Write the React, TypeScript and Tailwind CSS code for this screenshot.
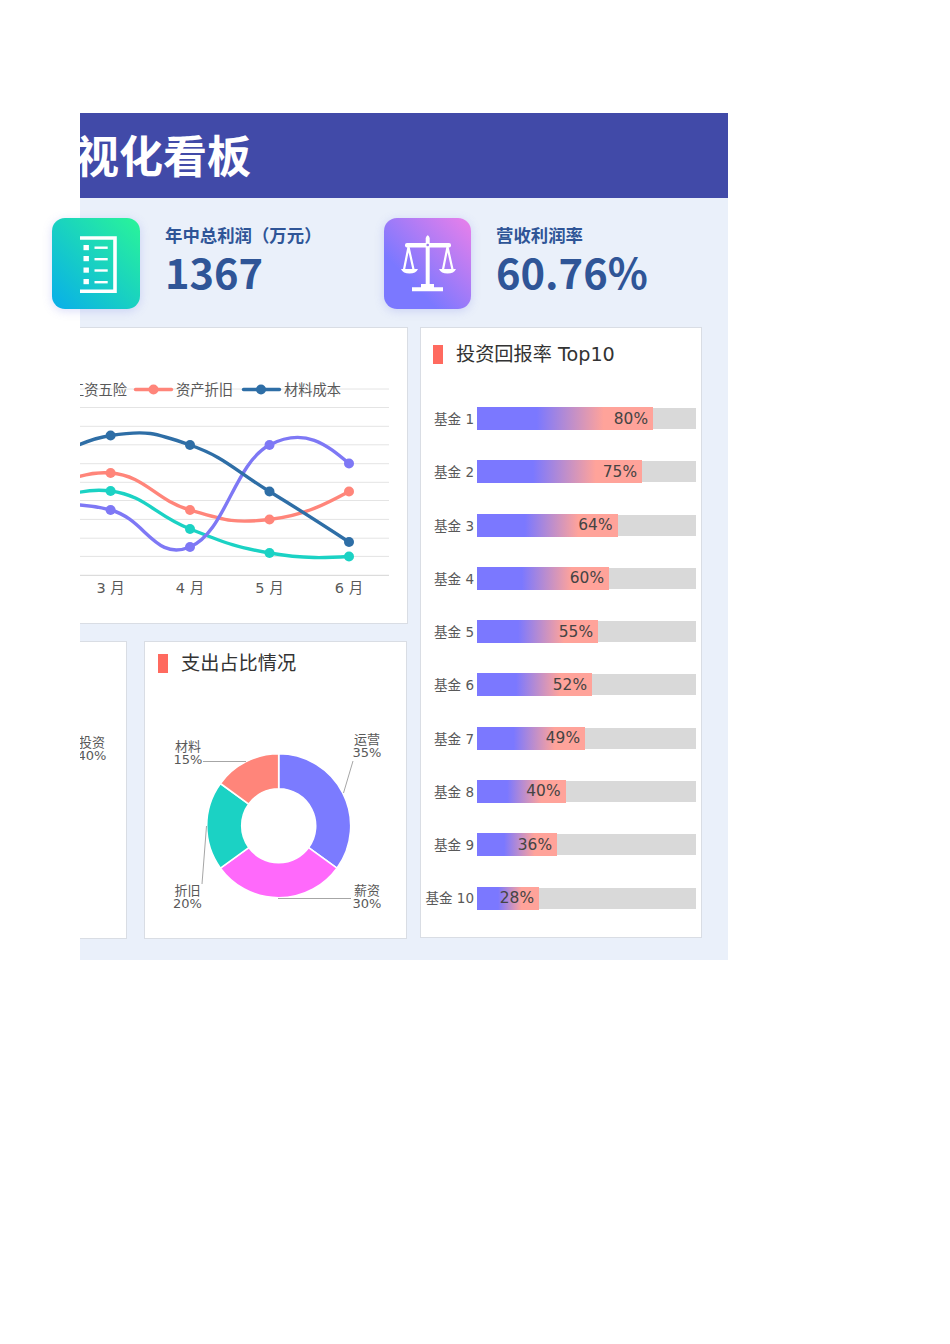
import React from "react";

const FONT = '"DejaVu Sans","Noto Sans CJK SC",sans-serif';
const CJK = '"Noto Sans CJK SC",sans-serif';
const XS = [31, 110.6, 190, 269.5, 349];
const GRID = [389, 407.5, 426.3, 444.8, 463.7, 482.3, 500.5, 519.4, 538.2, 556.4];

const SERIES = [
  { color: "#1bd2c4", ys: [508, 491, 529, 553, 556.5] },
  { color: "#ff857a", ys: [497, 473, 510, 519.5, 491.5] },
  { color: "#7e78f5", ys: [505, 510, 547, 445, 463.5] },
  { color: "#2e6ea6", ys: [470, 435.5, 445, 491.5, 542] },
];

function smooth(xs: number[], ys: number[]) {
  const k = 4.5;
  const n = xs.length;
  let d = `M${xs[0]} ${ys[0]}`;
  for (let i = 0; i < n - 1; i++) {
    const i0 = Math.max(0, i - 1);
    const c1x = xs[i] + (xs[i + 1] - xs[i0]) / k;
    const c1y = ys[i] + (ys[i + 1] - ys[i0]) / k;
    let c2x: number;
    let c2y: number;
    if (i + 2 < n) {
      c2x = xs[i + 1] - (xs[i + 2] - xs[i]) / k;
      c2y = ys[i + 1] - (ys[i + 2] - ys[i]) / k;
    } else {
      c2x = (c1x + xs[i + 1]) / 2;
      c2y = (c1y + ys[i + 1]) / 2;
    }
    d += ` C${c1x} ${c1y} ${c2x} ${c2y} ${xs[i + 1]} ${ys[i + 1]}`;
  }
  return d;
}

function LineChart() {
  return (
    <svg viewBox="80 327 328 297" className="block h-[297px] w-[328px]" style={{ fontFamily: FONT }}>
      {GRID.map((y) => (
        <line key={y} x1="70" x2="389" y1={y} y2={y} stroke="#e4e4e4" strokeWidth="1" />
      ))}
      <line x1="70" x2="389" y1="575.3" y2="575.3" stroke="#d4d4d4" strokeWidth="1" />
      {SERIES.map((s) => (
        <g key={s.color}>
          <path d={smooth(XS, s.ys)} fill="none" stroke={s.color} strokeWidth="3.4" strokeLinecap="round" />
          {XS.slice(1).map((x, i) => (
            <circle key={x} cx={x} cy={s.ys[i + 1]} r="5" fill={s.color} />
          ))}
        </g>
      ))}
      <text x="70" y="395" fontSize="14.25" fill="#595959">工资五险</text>
      <line x1="135.5" x2="171.5" y1="389.5" y2="389.5" stroke="#ff857a" strokeWidth="3.4" strokeLinecap="round" />
      <circle cx="153.5" cy="389.5" r="5" fill="#ff857a" />
      <text x="176" y="395" fontSize="14.25" fill="#595959">资产折旧</text>
      <line x1="243.5" x2="279.5" y1="389.5" y2="389.5" stroke="#2e6ea6" strokeWidth="3.4" strokeLinecap="round" />
      <circle cx="261" cy="389.5" r="5" fill="#2e6ea6" />
      <text x="284" y="395" fontSize="14.25" fill="#595959">材料成本</text>
      {["3 月", "4 月", "5 月", "6 月"].map((m, i) => (
        <text key={m} x={XS[i + 1]} y="592.5" fontSize="14.5" textAnchor="middle" fill="#595959">{m}</text>
      ))}
    </svg>
  );
}

function arc(cx: number, cy: number, R: number, r: number, a0: number, a1: number) {
  const p = (rad: number, a: number) => {
    const t = ((a - 90) * Math.PI) / 180;
    return `${(cx + rad * Math.cos(t)).toFixed(2)} ${(cy + rad * Math.sin(t)).toFixed(2)}`;
  };
  const large = a1 - a0 > 180 ? 1 : 0;
  return `M${p(R, a0)} A${R} ${R} 0 ${large} 1 ${p(R, a1)} L${p(r, a1)} A${r} ${r} 0 ${large} 0 ${p(r, a0)} Z`;
}

const SLICES = [
  { color: "#7b7bff", from: 0, to: 126 },
  { color: "#ff69fb", from: 126, to: 234 },
  { color: "#1bd2c4", from: 234, to: 306 },
  { color: "#ff857a", from: 306, to: 360 },
];

const LABELS = [
  { x: 367, y: 744, a: "运营", b: "35%" },
  { x: 367, y: 895, a: "薪资", b: "30%" },
  { x: 187.5, y: 895, a: "折旧", b: "20%" },
  { x: 188, y: 751, a: "材料", b: "15%" },
];

function Donut() {
  return (
    <svg viewBox="145 684 261 254" className="block h-[254px] w-[261px]" style={{ fontFamily: FONT }}>
      {SLICES.map((s) => (
        <path key={s.color} d={arc(278.7, 825.8, 72, 37, s.from, s.to)} fill={s.color} stroke="#fff" strokeWidth="1.6" />
      ))}
      <g fill="none" stroke="#a6a6a6" strokeWidth="1">
        <path d="M353 761 L343.5 793" />
        <path d="M278 898.5 L351 898.5" />
        <path d="M202 884 L206.5 826" />
        <path d="M203 761.5 L246 761.5" />
      </g>
      {LABELS.map((l) => (
        <g key={l.a} fontSize="13" fill="#595959" textAnchor="middle">
          <text x={l.x} y={l.y}>{l.a}</text>
          <text x={l.x} y={l.y + 13}>{l.b}</text>
        </g>
      ))}
    </svg>
  );
}

function DocIcon() {
  return (
    <svg viewBox="52 218 88 91" className="h-[91px] w-[88px]">
      <path d="M80 238 H115 V291.3 H80" fill="none" stroke="#fff" strokeWidth="3.6" />
      {[245, 256, 267.5, 279].map((y) => (
        <rect key={y} x="83.5" y={y} width="5.4" height="5.2" fill="#fff" />
      ))}
      {[246.5, 258, 269.3, 281].map((y) => (
        <rect key={y} x="94.5" y={y} width="13.2" height="2.4" fill="#fff" />
      ))}
    </svg>
  );
}

function ScaleIcon() {
  return (
    <svg viewBox="384 218 87 91" className="h-[91px] w-[87px]">
      <path d="M425.7 238 Q427.7 232.5 429.7 238 V284 H434 V287.3 H443 V291.3 H412 V287.3 H421 V284 H425.7 Z" fill="#fff" />
      <rect x="405" y="243" width="46" height="4.4" rx="2" fill="#fff" />
      <circle cx="427.7" cy="245" r="1.3" fill="#9b7bf0" />
      <g fill="none" stroke="#fff" strokeWidth="2.2">
        <path d="M408.5 247 L404 269.5 M408.5 247 L413.5 269.5" />
        <path d="M447.5 247 L443 269.5 M447.5 247 L452.5 269.5" />
      </g>
      <path d="M401 269 H418 Q416 273.5 409.5 273.5 Q403 273.5 401 269 Z" fill="#fff" />
      <path d="M439 269 H456 Q454 273.5 447.5 273.5 Q441 273.5 439 269 Z" fill="#fff" />
    </svg>
  );
}

function CardTitle({ children }: { children: React.ReactNode }) {
  return (
    <div className="flex h-[28px] items-center gap-[13px] text-[19.2px] text-[#333333]" style={{ fontFamily: FONT }}>
      <span className="h-[19px] w-[10px] bg-[#ff6a5f]" />
      <span className="pt-[2px] leading-[26px]">{children}</span>
    </div>
  );
}

const FUNDS = [
  { name: "基金 1", v: 80, w: 176 },
  { name: "基金 2", v: 75, w: 165 },
  { name: "基金 3", v: 64, w: 140.5 },
  { name: "基金 4", v: 60, w: 132 },
  { name: "基金 5", v: 55, w: 121 },
  { name: "基金 6", v: 52, w: 115 },
  { name: "基金 7", v: 49, w: 108 },
  { name: "基金 8", v: 40, w: 88.5 },
  { name: "基金 9", v: 36, w: 80 },
  { name: "基金 10", v: 28, w: 62 },
];

function Stat({ label, value, icon, gradient, wide }: { label: string; value: string; icon: React.ReactNode; gradient: string; wide: string }) {
  return (
    <div className={`flex ${wide} items-start`}>
      <div className={`h-[91px] shrink-0 overflow-hidden rounded-[13px] shadow-[0_2px_10px_rgba(110,120,230,0.25)] ${gradient}`}>
        {icon}
      </div>
      <div className="ml-[25px] flex flex-col">
        <div className="mt-[7px] text-[17.4px] font-bold leading-[20px] text-[#2f5597]" style={{ fontFamily: CJK }}>{label}</div>
        <div className="mt-[3px] text-[41.6px] font-bold leading-[46px] text-[#2f5597]" style={{ fontFamily: CJK }}>{value}</div>
      </div>
    </div>
  );
}

export default function App() {
  return (
    <div className="min-h-[1344px] bg-white pl-20 pt-[113px]">
      <div className="h-[847px] w-[648px] bg-[#eaf0fa]">
        <div className="h-[85px] overflow-hidden bg-[#414aa8]">
          <div
            className="ml-[-137px] mt-[-1px] whitespace-nowrap text-[44px] font-bold leading-[85px] text-white"
            style={{ fontFamily: CJK }}
          >
            数据可视化看板
          </div>
        </div>
        <div className="ml-[-28px] flex h-[129px] pt-5">
          <Stat
            label="年中总利润（万元）"
            value="1367"
            wide="w-[332px]"
            gradient="bg-linear-to-tr/srgb from-[#08aeea] to-[#2af598]"
            icon={<DocIcon />}
          />
          <Stat
            label="营收利润率"
            value="60.76%"
            wide="w-[344px]"
            gradient="bg-linear-to-tr/srgb from-[#7b78ff] from-30% to-[#ea80ea]"
            icon={<ScaleIcon />}
          />
        </div>
        <div className="flex">
          <div className="flex w-[328px] flex-col gap-[17px]">
            <div className="h-[297px] overflow-hidden border-y border-r border-[#d9dde4] bg-white">
              <div className="-mt-px">
                <LineChart />
              </div>
            </div>
            <div className="flex gap-[17px]">
              <div className="h-[298px] w-[47px] overflow-hidden border-y border-r border-[#d9dde4] bg-white">
                <div
                  className="flex w-[24px] flex-col items-center whitespace-nowrap pt-[94px] text-[13px] leading-[13px] text-[#595959]"
                  style={{ fontFamily: FONT }}
                >
                  <span>投资</span>
                  <span>40%</span>
                </div>
              </div>
              <div className="h-[298px] w-[263px] overflow-hidden border border-[#d9dde4] bg-white">
                <div className="px-[13px] pt-[7px]">
                  <CardTitle>支出占比情况</CardTitle>
                </div>
                <div className="mt-[7px]">
                  <Donut />
                </div>
              </div>
            </div>
          </div>
          <div className="ml-3 h-[611px] w-[282px] border border-[#d9dde4] bg-white">
            <div className="px-3 pt-[12px]">
              <CardTitle>投资回报率 Top10</CardTitle>
            </div>
            <div className="mt-[24px] flex flex-col">
              {FUNDS.map((f) => (
                <div key={f.name} className="flex h-[53.27px] items-center" style={{ fontFamily: FONT }}>
                  <div className="w-[53px] whitespace-nowrap pt-px text-right text-[13.5px] text-[#595959]">{f.name}</div>
                  <div className="ml-[3px] flex h-[21px] w-[219px] items-center bg-[#d9d9d9]">
                    <div
                      className="flex h-[23px] items-center justify-end bg-linear-to-r/srgb from-[#7b78ff] from-[34%] to-[#ffa39a] to-[72%] pr-[5px] pt-px text-[15.4px] text-[#444444]"
                      style={{ width: f.w }}
                    >
                      {f.v}%
                    </div>
                  </div>
                </div>
              ))}
            </div>
          </div>
        </div>
      </div>
    </div>
  );
}
